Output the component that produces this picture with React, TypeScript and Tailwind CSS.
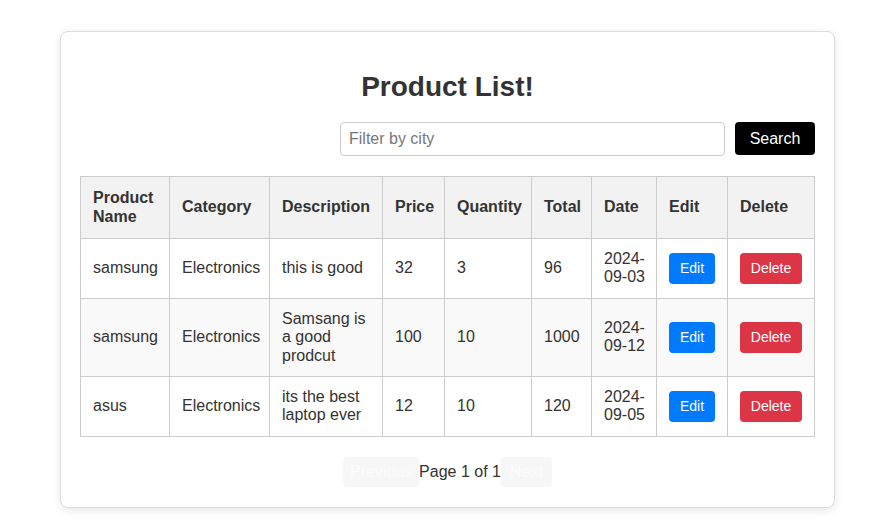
import React from "react";

type Row = {
  name: string;
  category: string;
  description: string;
  price: string;
  quantity: string;
  total: string;
  date: [string, string];
};

const rows: Row[] = [
  { name: "samsung", category: "Electronics", description: "this is good", price: "32", quantity: "3", total: "96", date: ["2024-", "09-03"] },
  { name: "samsung", category: "Electronics", description: "Samsang is a good prodcut", price: "100", quantity: "10", total: "1000", date: ["2024-", "09-12"] },
  { name: "asus", category: "Electronics", description: "its the best laptop ever", price: "12", quantity: "10", total: "120", date: ["2024-", "09-05"] },
];

const widths = [89, 100, 113, 62, 87, 60, 65, 71, 87];
const headers = ["Product Name", "Category", "Description", "Price", "Quantity", "Total", "Date", "Edit", "Delete"];

const th = "border border-[#cccccc] p-3 text-left align-middle font-bold leading-[18.4px]";
const td = "border border-[#cccccc] px-3 py-[11px] text-left align-middle leading-[18.4px]";

export default function App() {
  return (
    <div className="min-h-[530px] bg-white text-[#333333] text-base font-['Liberation_Sans',Arial,sans-serif]">
      <div className="h-[31px]" />
      <div className="ml-[60px] w-[775px] rounded-lg border border-[#dddddd] bg-white p-5 shadow-[0_2px_8px_rgba(0,0,0,0.1)]">
        <h1 className="mt-[18.76px] mb-[18.76px] text-center text-[28px] font-bold leading-[32.2px]">Product List!</h1>
        <div className="flex items-center justify-end gap-[10px] -mr-[1px]">
          <input
            className="h-[34.4px] w-[385px] rounded border border-[#cccccc] px-2 text-base text-[#333] placeholder:text-[#777777] outline-none"
            placeholder="Filter by city"
          />
          <button className="h-[33px] w-[80px] rounded bg-black text-base text-white">Search</button>
        </div>
        <table className="mt-5 w-[734px] table-fixed border-collapse -ml-[1px]">
          <colgroup>
            {widths.map((w, i) => (
              <col key={i} style={{ width: w }} />
            ))}
          </colgroup>
          <thead>
            <tr className="bg-[#f2f2f2]">
              {headers.map((h) => (
                <th key={h} className={th}>
                  {h}
                </th>
              ))}
            </tr>
          </thead>
          <tbody>
            {rows.map((r, i) => (
              <tr key={i} className={i % 2 === 1 ? "bg-[#f9f9f9]" : "bg-white"}>
                <td className={td}>{r.name}</td>
                <td className={td}>{r.category}</td>
                <td className={td}>{r.description}</td>
                <td className={td}>{r.price}</td>
                <td className={td}>{r.quantity}</td>
                <td className={td}>{r.total}</td>
                <td className={`${td} whitespace-nowrap`}>
                  {r.date[0]}
                  <br />
                  {r.date[1]}
                </td>
                <td className={td}>
                  <button className="block h-[31px] w-[46px] rounded bg-[#007bff] text-sm text-white">Edit</button>
                </td>
                <td className={td}>
                  <button className="block h-[31px] w-[62px] rounded bg-[#dc3545] text-sm text-white">Delete</button>
                </td>
              </tr>
            ))}
          </tbody>
        </table>
        <div className="mt-5 flex items-center justify-center">
          <button className="h-[30px] w-[76px] rounded bg-[#f7f7f7] text-base text-[#fcfcfc]">Previous</button>
          <span className="text-base leading-[18.4px]">Page 1 of 1</span>
          <button className="h-[30px] w-[51px] rounded bg-[#f7f7f7] text-base text-[#fcfcfc]">Next</button>
        </div>
      </div>
    </div>
  );
}
